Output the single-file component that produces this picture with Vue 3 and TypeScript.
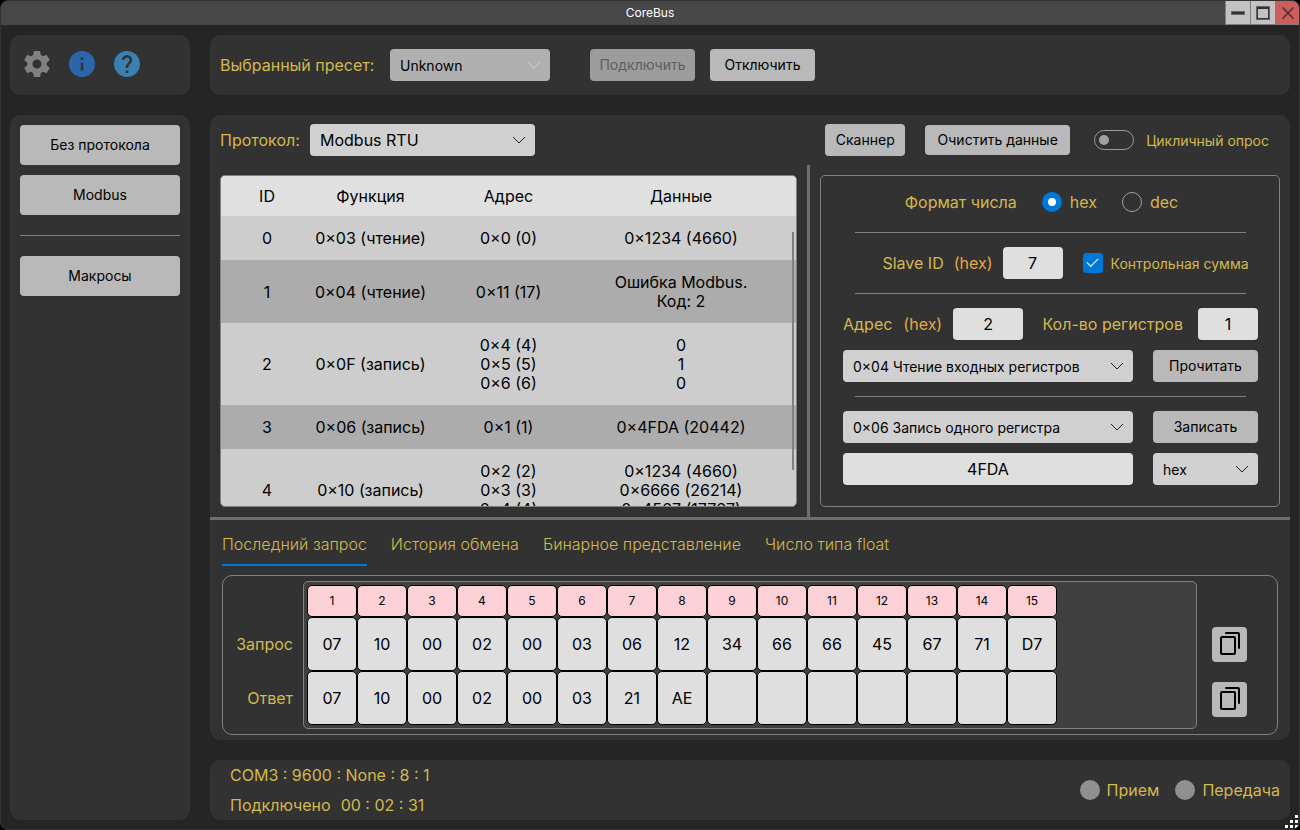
<script setup lang="ts">
import { ref } from 'vue'

interface LogRow {
  id: number
  func: string
  address: string[]
  data: string[]
}

const navTop = ['Без протокола', 'Modbus']
const preset = ref('Unknown')
const protocol = ref('Modbus RTU')
const cyclic = ref(false)
const numberFormat = ref('hex')
const slaveId = ref('7')
const checksum = ref(true)
const address = ref('2')
const count = ref('1')
const readFunc = ref('0×04 Чтение входных регистров')
const writeFunc = ref('0×06 Запись одного регистра')
const writeValue = ref('4FDA')
const writeFormat = ref('hex')

const rows: LogRow[] = [
  { id: 0, func: '0×03 (чтение)', address: ['0×0 (0)'], data: ['0×1234 (4660)'] },
  { id: 1, func: '0×04 (чтение)', address: ['0×11 (17)'], data: ['Ошибка Modbus.', 'Код: 2'] },
  { id: 2, func: '0×0F (запись)', address: ['0×4 (4)', '0×5 (5)', '0×6 (6)'], data: ['0', '1', '0'] },
  { id: 3, func: '0×06 (запись)', address: ['0×1 (1)'], data: ['0×4FDA (20442)'] },
  {
    id: 4,
    func: '0×10 (запись)',
    address: ['0×2 (2)', '0×3 (3)', '0×4 (4)'],
    data: ['0×1234 (4660)', '0×6666 (26214)', '0×4567 (17767)'],
  },
]

const tabs = ['Последний запрос', 'История обмена', 'Бинарное представление', 'Число типа float']
const activeTab = ref(0)

const request = ['07', '10', '00', '02', '00', '03', '06', '12', '34', '66', '66', '45', '67', '71', 'D7']
const response = ['07', '10', '00', '02', '00', '03', '21', 'AE', '', '', '', '', '', '', '']
</script>

<template>
  <div class="window">
    <header class="titlebar">
      <span class="title">CoreBus</span>
      <div class="win-buttons">
        <button type="button" aria-label="Свернуть">
          <svg width="16" height="16" viewBox="0 0 16 16"><rect x="1.5" y="6.5" width="13" height="3" fill="#333" stroke="#666" /></svg>
        </button>
        <button type="button" aria-label="Развернуть">
          <svg width="16" height="16" viewBox="0 0 16 16">
            <rect x="1.5" y="1.5" width="13" height="13" fill="none" stroke="#666" />
            <rect x="2.5" y="2.5" width="11" height="11" fill="none" stroke="#333" />
            <path d="M2 3H14" stroke="#333" stroke-width="2" />
          </svg>
        </button>
        <button type="button" class="close" aria-label="Закрыть">
          <svg width="16" height="16" viewBox="0 0 16 16"><path d="M2.5 2.5L13.5 13.5M13.5 2.5L2.5 13.5" stroke="#4a3030" stroke-width="1.500" fill="none" /></svg>
        </button>
      </div>
    </header>

    <div class="body">
      <aside class="left">
        <div class="card icons">
          <button type="button" aria-label="Настройки">
            <svg width="26" height="26" viewBox="2 2 20 20" fill="#808080">
              <path d="M12,15.5A3.5,3.5 0 0,1 8.5,12A3.5,3.5 0 0,1 12,8.5A3.5,3.5 0 0,1 15.5,12A3.5,3.5 0 0,1 12,15.5M19.43,12.97C19.47,12.65 19.5,12.33 19.5,12C19.5,11.67 19.47,11.34 19.43,11L21.54,9.37C21.73,9.22 21.78,8.95 21.66,8.73L19.66,5.27C19.54,5.05 19.27,4.96 19.05,5.05L16.56,6.05C16.04,5.66 15.5,5.32 14.87,5.07L14.5,2.42C14.46,2.18 14.25,2 14,2H10C9.75,2 9.54,2.18 9.5,2.42L9.13,5.07C8.5,5.32 7.96,5.66 7.44,6.05L4.95,5.05C4.73,4.96 4.46,5.05 4.34,5.27L2.34,8.73C2.21,8.95 2.27,9.22 2.46,9.37L4.57,11C4.53,11.34 4.5,11.67 4.5,12C4.5,12.33 4.53,12.65 4.57,12.97L2.46,14.63C2.27,14.78 2.21,15.05 2.34,15.27L4.34,18.73C4.46,18.95 4.73,19.03 4.95,18.95L7.44,17.94C7.96,18.34 8.5,18.68 9.13,18.93L9.5,21.58C9.54,21.82 9.75,22 10,22H14C14.25,22 14.46,21.82 14.5,21.58L14.87,18.93C15.5,18.67 16.04,18.34 16.56,17.94L19.05,18.95C19.27,19.03 19.54,18.95 19.66,18.73L21.66,15.27C21.78,15.05 21.73,14.78 21.54,14.63L19.43,12.97Z" />
            </svg>
          </button>
          <button type="button" aria-label="О программе">
            <svg width="26" height="26" viewBox="2 2 20 20" fill="#2b66aa">
              <path d="M13,9H11V7H13M13,17H11V11H13M12,2A10,10 0 0,0 2,12A10,10 0 0,0 12,22A10,10 0 0,0 22,12A10,10 0 0,0 12,2Z" />
            </svg>
          </button>
          <button type="button" aria-label="Справка">
            <svg width="26" height="26" viewBox="2 2 20 20" fill="#3a80b0">
              <path d="M15.07,11.25L14.17,12.17C13.45,12.89 13,13.5 13,15H11V14.5C11,13.39 11.45,12.39 12.17,11.67L13.41,10.41C13.78,10.05 14,9.55 14,9C14,7.89 13.1,7 12,7A2,2 0 0,0 10,9H8A4,4 0 0,1 12,5A4,4 0 0,1 16,9C16,9.88 15.64,10.67 15.07,11.25M13,19H11V17H13M12,2A10,10 0 0,0 2,12A10,10 0 0,0 12,22A10,10 0 0,0 22,12C22,6.47 17.5,2 12,2Z" />
            </svg>
          </button>
        </div>
        <nav class="card nav">
          <button v-for="item in navTop" :key="item" type="button" class="btn">{{ item }}</button>
          <hr />
          <button type="button" class="btn">Макросы</button>
        </nav>
      </aside>

      <main class="right">
        <section class="card connection">
          <label for="preset">Выбранный пресет:</label>
          <div class="select preset">
            <select id="preset" v-model="preset" disabled><option>Unknown</option></select>
            <svg width="14" height="8" viewBox="0 0 14 8"><path d="M1 1L7 7L13 1" /></svg>
          </div>
          <button type="button" class="btn action" disabled>Подключить</button>
          <button type="button" class="btn action">Отключить</button>
        </section>

        <section class="card main">
          <div class="toolbar">
            <label for="protocol">Протокол:</label>
            <div class="select big protocol">
              <select id="protocol" v-model="protocol"><option>Modbus RTU</option></select>
              <svg width="14" height="8" viewBox="0 0 14 8"><path d="M1 1L7 7L13 1" /></svg>
            </div>
            <button type="button" class="btn scanner">Сканнер</button>
            <button type="button" class="btn clear">Очистить данные</button>
            <label class="toggle"><input v-model="cyclic" type="checkbox" role="switch" /><span>Цикличный опрос</span></label>
          </div>

          <div class="split">
            <div class="pane">
              <div class="log">
                <div class="log-scroll">
                  <table>
                    <thead>
                      <tr><th class="c-id">ID</th><th class="c-func">Функция</th><th class="c-addr">Адрес</th><th>Данные</th></tr>
                    </thead>
                    <tbody>
                      <tr v-for="row in rows" :key="row.id">
                        <td>{{ row.id }}</td>
                        <td>{{ row.func }}</td>
                        <td><div v-for="a in row.address" :key="a">{{ a }}</div></td>
                        <td><div v-for="(d, i) in row.data" :key="i">{{ d }}</div></td>
                      </tr>
                    </tbody>
                  </table>
                </div>
                <div class="thumb"></div>
              </div>
            </div>
            <div class="splitter"></div>
            <div class="pane">
              <form class="form" @submit.prevent>
                <div class="row format">
                  <span class="caption">Формат числа</span>
                  <label class="choice"><input v-model="numberFormat" type="radio" name="format" value="hex" />hex</label>
                  <label class="choice"><input v-model="numberFormat" type="radio" name="format" value="dec" />dec</label>
                </div>
                <hr class="wide" />
                <div class="row slave">
                  <label for="slave">Slave ID</label>
                  <span class="unit">(hex)</span>
                  <input id="slave" v-model="slaveId" class="box short" type="text" />
                  <label class="choice small"><input v-model="checksum" type="checkbox" /><span>Контрольная сумма</span></label>
                </div>
                <hr />
                <div class="row address">
                  <label for="address">Адрес</label>
                  <span class="unit">(hex)</span>
                  <input id="address" v-model="address" class="box medium" type="text" />
                  <label for="count" class="count">Кол-во регистров</label>
                  <input id="count" v-model="count" class="box short" type="text" />
                </div>
                <div class="pair">
                  <div class="select">
                    <select v-model="readFunc" aria-label="Функция чтения"><option>0×04 Чтение входных регистров</option></select>
                    <svg width="14" height="8" viewBox="0 0 14 8"><path d="M1 1L7 7L13 1" /></svg>
                  </div>
                  <button type="button" class="btn">Прочитать</button>
                </div>
                <hr />
                <div class="pair first">
                  <div class="select">
                    <select v-model="writeFunc" aria-label="Функция записи"><option>0×06 Запись одного регистра</option></select>
                    <svg width="14" height="8" viewBox="0 0 14 8"><path d="M1 1L7 7L13 1" /></svg>
                  </div>
                  <button type="button" class="btn">Записать</button>
                </div>
                <div class="pair">
                  <input v-model="writeValue" class="box" type="text" aria-label="Значение" />
                  <div class="select">
                    <select v-model="writeFormat" aria-label="Формат значения"><option>hex</option></select>
                    <svg width="14" height="8" viewBox="0 0 14 8"><path d="M1 1L7 7L13 1" /></svg>
                  </div>
                </div>
              </form>
            </div>
          </div>

          <div class="details">
            <div class="tabs" role="tablist">
              <button
                v-for="(tab, i) in tabs"
                :key="tab"
                type="button"
                role="tab"
                :aria-selected="i === activeTab"
                :class="{ active: i === activeTab }"
                @click="activeTab = i"
              >{{ tab }}</button>
            </div>
            <div class="frame">
              <div class="names">
                <span>Запрос</span>
                <span>Ответ</span>
              </div>
              <div class="bytes">
                <table>
                  <thead>
                    <tr><th v-for="(b, i) in request" :key="i">{{ i + 1 }}</th></tr>
                  </thead>
                  <tbody>
                    <tr><td v-for="(b, i) in request" :key="i">{{ b }}</td></tr>
                    <tr><td v-for="(b, i) in response" :key="i">{{ b }}</td></tr>
                  </tbody>
                </table>
              </div>
              <div class="copies">
                <button v-for="name in ['запрос', 'ответ']" :key="name" type="button" :aria-label="'Копировать ' + name">
                  <svg width="25" height="25" viewBox="0 0 25 25" fill="none" stroke="#000" stroke-width="2" stroke-linejoin="round" stroke-linecap="round">
                    <rect x="4" y="5" width="14" height="17" rx="1" />
                    <path d="M9 1H21Q22 1 22 2V16" />
                  </svg>
                </button>
              </div>
            </div>
          </div>
        </section>

        <footer class="card status">
          <div class="info">
            <div>COM3 : 9600 : None : 8 : 1</div>
            <div class="state"><span>Подключено</span><span>00 : 02 : 31</span></div>
          </div>
          <div class="lamp">Прием</div>
          <div class="lamp">Передача</div>
        </footer>
      </main>
    </div>
    <svg class="grip" width="13" height="13" viewBox="0 0 13 13" fill="#fff">
      <path d="M10 0h3v3h-3zM5 5h3v3h-3zM10 5h3v3h-3zM0 10h3v3h-3zM5 10h3v3h-3zM10 10h3v3h-3z" />
    </svg>
  </div>
</template>

<style>
html {
  background: #000;
}
</style>

<style scoped>
* {
  box-sizing: border-box;
}

.window {
  position: relative;
  display: flex;
  flex-direction: column;
  height: 100vh;
  min-height: 700px;
  min-width: 1100px;
  border: 1px solid #333;
  border-radius: 8px;
  overflow: hidden;
  background: #252525;
  color: #d3b84f;
  font: 16px/20px Inter, "Noto Sans", sans-serif;
}

button,
input,
select {
  margin: 0;
  font: inherit;
  color: inherit;
}

button {
  padding: 0;
  border: 0;
  background: none;
}

.titlebar {
  display: grid;
  grid-template-columns: 1fr auto 1fr;
  flex: none;
  height: 24px;
  background: #484848;
}

.title {
  grid-column: 2;
  color: #fff;
  font-size: 12px;
  line-height: 24px;
}

.win-buttons {
  display: flex;
  justify-content: flex-end;
}

.win-buttons button {
  display: flex;
  align-items: center;
  justify-content: center;
  width: 25px;
  border: solid #808080;
  border-width: 0 0 1px 1px;
  background: #c2c2c2;
}

.win-buttons .close {
  width: 24px;
  background: #cd5c5c;
}

.body {
  display: grid;
  grid-template-columns: 180px minmax(0, 1fr);
  flex: 1;
  gap: 20px;
  min-height: 0;
  padding: 10px 9px 9px;
}

.left,
.right {
  display: flex;
  flex-direction: column;
  gap: 20px;
  min-height: 0;
}

.card {
  border-radius: 10px;
  background: #323232;
}

.icons {
  display: flex;
  align-items: center;
  gap: 19px;
  height: 60px;
  padding: 0 14px 2px;
}

.icons svg {
  display: block;
}

.nav {
  display: flex;
  flex: 1;
  flex-direction: column;
  gap: 10px;
  padding: 10px;
}

.nav .btn {
  height: 40px;
}

.nav hr {
  width: 100%;
  margin: 10px 0;
}

hr {
  height: 1px;
  margin: 14px 12px;
  border: 0;
  background: #808080;
}

.btn {
  height: 32px;
  border-radius: 4px;
  background: #b9b9b9;
  color: #000;
  font-size: 14px;
}

.btn:disabled {
  background: #9c9c9c;
  color: #5f5f5f;
}

.select {
  position: relative;
  height: 32px;
  color: #000;
  font-size: 14px;
}

.select.big {
  font-size: 16px;
}

.select select {
  display: block;
  width: 100%;
  height: 100%;
  padding: 2px 34px 0 10px;
  appearance: none;
  border: 0;
  border-radius: 4px;
  background: #d0d0d0;
}

.select.big select {
  padding-top: 0;
}

.select select:disabled {
  background: #b0b0b0;
  opacity: 1;
}

.select svg {
  position: absolute;
  top: 12px;
  right: 9px;
  fill: none;
  stroke: #222;
  pointer-events: none;
}

.select select:disabled + svg {
  stroke: #d0d0d0;
}

.box {
  width: 100%;
  height: 32px;
  padding: 0 8px;
  border: 0;
  border-radius: 4px;
  background: #dfdfdf;
  color: #000;
  text-align: center;
}

.connection {
  display: flex;
  flex: none;
  align-items: center;
  height: 60px;
  padding: 0 10px;
}

.connection label {
  width: 170px;
}

.preset {
  width: 160px;
  margin-right: 25px;
}

.action {
  width: 105px;
  margin-left: 15px;
}

.main {
  display: flex;
  flex: 1;
  flex-direction: column;
  min-height: 0;
}

.toolbar {
  display: flex;
  flex: none;
  align-items: center;
  height: 50px;
  padding: 0 21px 0 10px;
}

.toolbar > label:first-child {
  width: 90px;
}

.protocol {
  width: 225px;
}

.scanner {
  width: 80px;
  margin-left: auto;
}

.clear {
  width: 145px;
  height: 30px;
  margin: 0 24px 0 20px;
}

.toggle {
  display: flex;
  align-items: center;
  gap: 12px;
  font-size: 14px;
}

.toggle span,
.small span {
  padding-top: 2px;
}

.toggle input {
  display: flex;
  align-items: center;
  width: 40px;
  height: 20px;
  padding: 0 4px;
  appearance: none;
  border: 1px solid #9a9a9a;
  border-radius: 10px;
}

.toggle input::before {
  width: 10px;
  height: 10px;
  border-radius: 5px;
  background: #a0a0a0;
  content: "";
}

.toggle input:checked::before {
  margin-left: auto;
}

.split {
  display: grid;
  grid-template-columns: minmax(0, 1fr) 3px 480px;
  grid-template-rows: minmax(0, 1fr);
  flex: 1;
  min-height: 0;
  border-bottom: 3px solid #6e6e6e;
}

.splitter {
  background: #6e6e6e;
}

.pane {
  display: flex;
  min-height: 0;
  padding: 10px;
}

.log {
  position: relative;
  flex: 1;
  overflow: hidden;
  border: 1px solid #808080;
  border-radius: 5px;
  background: #cdcdcd;
  color: #000;
}

.log-scroll {
  height: 100%;
  overflow-y: auto;
  scrollbar-width: none;
}

.log table {
  width: 100%;
  table-layout: fixed;
  border-collapse: collapse;
  text-align: center;
  line-height: 19px;
}

.log th {
  position: sticky;
  top: 0;
  height: 40px;
  padding: 0;
  background: #e0e0e0;
  font-weight: 400;
}

.log td {
  padding: 13px 0 12px;
}

.log th:last-child,
.log td:last-child {
  padding-right: 23px;
}

.log tbody tr:nth-child(even) {
  background: #acacac;
}

.c-id {
  width: 16%;
}

.c-func {
  width: 20%;
}

.c-addr {
  width: 28%;
}

.thumb {
  position: absolute;
  top: 56px;
  right: 2px;
  width: 2px;
  height: 72%;
  background: #808080;
}

.form {
  flex: 1;
  padding: 16px 21px 20px 22px;
  border: 1px solid #808080;
  border-radius: 5px;
}

.form .wide {
  margin-top: 20px;
}

.row {
  display: flex;
  align-items: center;
}

.format {
  justify-content: center;
  gap: 25px;
  padding-right: 18px;
}

.choice {
  display: flex;
  align-items: center;
  gap: 8px;
}

.choice input {
  width: 20px;
  height: 20px;
  appearance: none;
  border: 1px solid #a0a0a0;
}

.choice input[type="radio"] {
  border-radius: 50%;
}

.choice input[type="radio"]:checked {
  border: 6px solid #0078d7;
  background: #fff;
}

.choice input[type="checkbox"] {
  display: flex;
  align-items: center;
  justify-content: center;
  border-radius: 3px;
}

.choice input[type="checkbox"]:checked {
  border-color: #0078d7;
  background: #0078d7;
}

.choice input[type="checkbox"]:checked::before {
  width: 10px;
  height: 5px;
  margin-bottom: 4px;
  border: solid #fff;
  border-width: 0 0 1px 1px;
  transform: rotate(-45deg);
  content: "";
}

.slave {
  justify-content: center;
  gap: 10px;
  padding-left: 30px;
}

.small {
  margin-left: 10px;
  font-size: 14px;
}

.unit {
  color: #e8a545;
}

.row .short {
  width: 60px;
}

.row .medium {
  width: 70px;
}

.address {
  gap: 11px;
}

.address .count {
  margin: 0 4px 0 auto;
}

.pair {
  display: grid;
  grid-template-columns: 1fr 105px;
  gap: 20px;
  margin-top: 10px;
}

.pair.first {
  margin-top: 0;
}

.details {
  flex: none;
  padding: 0 12px 5px;
}

.tabs {
  display: flex;
  gap: 24px;
  margin-bottom: 9px;
}

.tabs button {
  height: 46px;
  padding-top: 4px;
  border-bottom: 2px solid transparent;
  font-weight: 300;
}

.tabs .active {
  border-color: #0078d7;
}

.frame {
  display: flex;
  padding: 5px 30px 5px 0;
  border: 1px solid #808080;
  border-radius: 10px;
}

.names {
  display: flex;
  flex-direction: column;
  align-items: flex-end;
  width: 70px;
  margin-right: 10px;
  padding-top: 36px;
  line-height: 54px;
}

.bytes {
  flex: 1;
  min-width: 0;
  padding: 3px;
  overflow: hidden;
  border: 1px solid #808080;
  border-radius: 5px;
  background: #404040;
}

.bytes table {
  border-spacing: 0;
  color: #000;
  text-align: center;
}

.bytes th,
.bytes td {
  width: 50px;
  min-width: 50px;
  height: 54px;
  padding: 0;
  border: 1px solid #000;
  border-radius: 5px;
  background: #dfdfdf;
}

.bytes th {
  height: 32px;
  background: #fcd0d7;
  font-size: 12px;
  font-weight: 400;
}

.copies {
  display: flex;
  flex-direction: column;
  gap: 20px;
  padding: 46px 0 0 15px;
}

.copies button {
  display: flex;
  align-items: center;
  justify-content: center;
  width: 35px;
  height: 35px;
  border-radius: 4px;
  background: #b9b9b9;
}

.status {
  display: flex;
  flex: none;
  align-items: center;
  gap: 16px;
  padding: 0 10px 0 20px;
}

.info {
  flex: 1;
  line-height: 30px;
}

.state {
  display: flex;
  gap: 10px;
}

.lamp {
  display: flex;
  align-items: center;
  gap: 7px;
}

.lamp::before {
  width: 20px;
  height: 20px;
  border-radius: 50%;
  background: #909090;
  content: "";
}

.grip {
  position: absolute;
  right: 1px;
  bottom: 1px;
}
</style>
